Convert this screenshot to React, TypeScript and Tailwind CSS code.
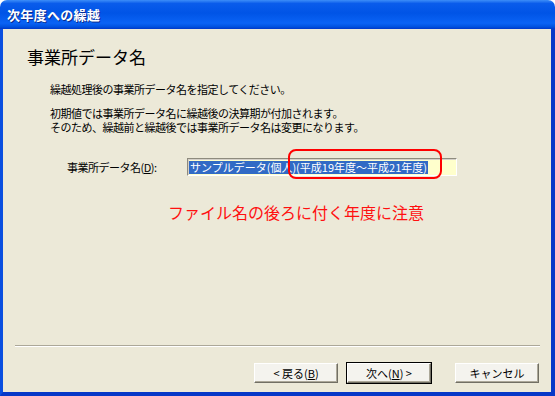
import React from "react";

const jp = { fontFamily: '"Noto Sans CJK JP", "Noto Sans", sans-serif' };

function XpButton({ children, isDefault }: { children: React.ReactNode; isDefault?: boolean }) {
  return (
    <div className={isDefault ? "border border-black" : "border border-transparent"}>
      <button
        className="w-[84px] h-[20px] flex items-center justify-center bg-[#F4F3EE] border border-t-white border-l-white border-r-[#716F64] border-b-[#716F64] shadow-[inset_-1px_-1px_0_#ACA899] text-[11px] text-black leading-none"
        style={jp}
      >
        {children}
      </button>
    </div>
  );
}

export default function App() {
  return (
    <div className="w-[555px] h-[396px] flex flex-col overflow-hidden bg-white" style={jp}>
      {/* title bar */}
      <div className="h-[29px] shrink-0 rounded-t-[7px] flex items-center pl-[7px] bg-[linear-gradient(to_bottom,#3D8EF8_0%,#0A5CEB_12%,#0054E6_45%,#0A63F5_80%,#0052E0_92%,#0038C8_100%)]">
        <span className="text-white text-[13px] font-bold tracking-[0.3px] [text-shadow:1px_1px_0_#0B2A8C]">
          次年度への繰越
        </span>
      </div>

      {/* body */}
      <div className="flex-1 flex flex-col bg-[#ECE9D8] border-l-[3px] border-r-[4px] border-b-[4px] border-l-[#0A4FE0] border-r-[#0638C8] border-b-[#0638C8]">
        <div className="flex-1 flex flex-col">
          <h1 className="pt-[18px] pl-[24px] text-[17px] leading-[20px] text-black font-normal">
            事業所データ名
          </h1>

          <div className="pl-[47px] mt-[15px] text-[11px] leading-[14px] tracking-[-0.5px] text-black">
            <p>繰越処理後の事業所データ名を指定してください。</p>
            <p className="mt-[10px]">初期値では事業所データ名に繰越後の決算期が付加されます。</p>
            <p>そのため、繰越前と繰越後では事業所データ名は変更になります。</p>
          </div>

          <div className="mt-[24px] pl-[64px] flex items-center">
            <label className="w-[120px] text-[11px] tracking-[-0.5px] text-black leading-none">
              事業所データ名(<span className="underline">D</span>):
            </label>
            <div className="relative w-[270px] h-[18px] bg-[#FFFFCC] border border-t-[#8E8B7E] border-l-[#8E8B7E] border-r-white border-b-white shadow-[inset_1px_1px_0_#D4D0C8] flex items-center pl-[1px]">
              <span className="bg-[#316AC5] text-white text-[11px] leading-[13px] px-[1px] whitespace-nowrap">
                サンプルデータ(個人)(平成19年度〜平成21年度)
              </span>
              <div className="absolute left-[100px] top-[-10px] w-[154px] h-[30px] border-2 border-[#FF0000] rounded-[8px]" />
            </div>
          </div>

          <p className="mt-[26px] pl-[165px] text-[16px] leading-[20px] text-[#FF1010]">
            ファイル名の後ろに付く年度に注意
          </p>
        </div>

        {/* footer */}
        <div className="ml-[12px] mr-[11px] border-t border-t-[#ACA899] border-b border-b-white" />
        <div className="mt-[15px] mb-[8px] pr-[11px] flex justify-end">
          <XpButton>
            &lt; 戻る(<span className="underline">B</span>)
          </XpButton>
          <div className="w-[7px]" />
          <XpButton isDefault>
            次へ(<span className="underline">N</span>) &gt;
          </XpButton>
          <div className="w-[22px]" />
          <XpButton>キャンセル</XpButton>
        </div>
      </div>
    </div>
  );
}
